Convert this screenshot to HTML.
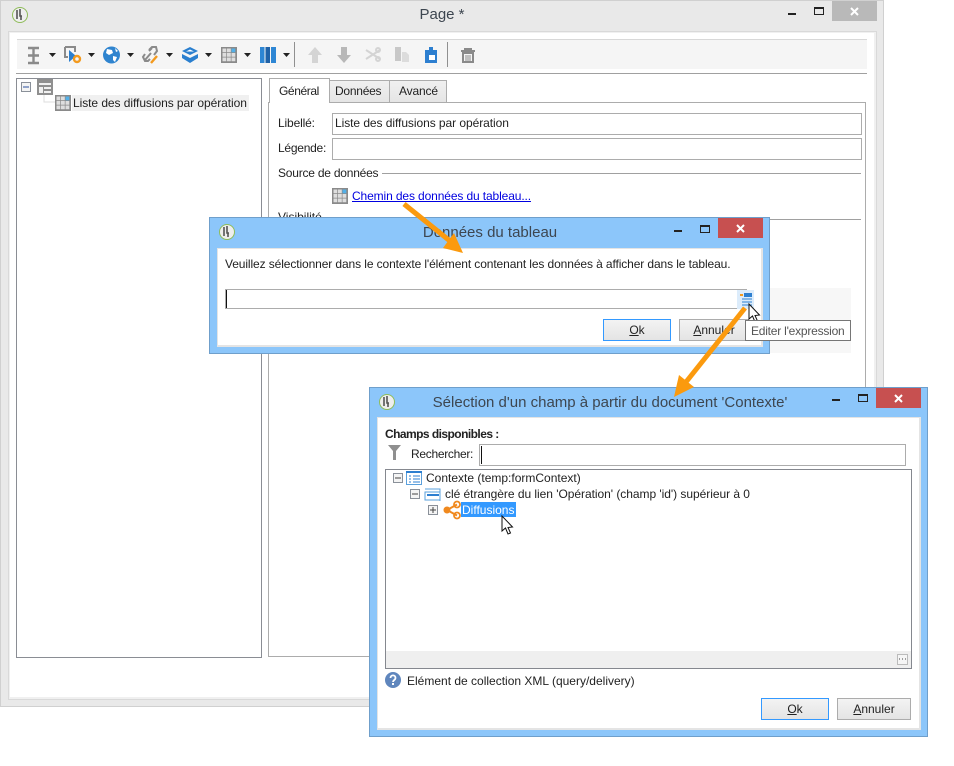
<!DOCTYPE html>
<html><head><meta charset="utf-8">
<style>
html,body{margin:0;padding:0;background:#fff}
body{width:954px;height:766px;position:relative;overflow:hidden;font:12px "Liberation Sans",sans-serif;color:#222}
.b{position:absolute;box-sizing:border-box}
.t{position:absolute;white-space:nowrap;line-height:16px}
.title{font-size:15px;color:#3d4650;line-height:20px;text-align:center}
.btn{position:absolute;box-sizing:border-box;height:22px;background:linear-gradient(#f3f3f3,#e4e4e4);border:1px solid #acacac;text-align:center;line-height:20px;font-size:12px;color:#222}
.btn.d{border:1px solid #3399ff}
svg{position:absolute;overflow:visible}
</style></head><body>

<!-- Main window -->
<div class="b" style="left:0;top:0;width:884px;height:707px;background:#e9e9e9;border:1px solid #d0d0d0;border-top-width:1px"></div>
<div class="b" style="left:8px;top:31px;width:869px;height:669px;background:#f0f0f0;border:1px solid #d9d9d9"></div>
<div class="b" style="left:10px;top:33px;width:864px;height:664px;background:#fff"></div>
<div class="t title" style="left:342px;top:5px;width:200px">Page *</div>
<svg style="left:0;top:0" width="30" height="30"><circle cx="20" cy="15" r="7.5" fill="#eee" stroke="#8fbc5a"/><path d="M17 10v9M20 9v7h2M21 16v4" stroke="#555" stroke-width="1.6" fill="none"/></svg>
<div class="b" style="left:788px;top:13px;width:8px;height:2px;background:#222"></div>
<div class="b" style="left:814px;top:7px;width:10px;height:8px;border:1px solid #222;border-top-width:2px"></div>
<div class="b" style="left:832px;top:1px;width:45px;height:20px;background:#b9b9b9"></div>
<svg style="left:850px;top:7px" width="10" height="9"><path d="M1 1l7 7M8 1l-7 7" stroke="#fff" stroke-width="2"/></svg>

<!-- Toolbar -->
<div class="b" style="left:17px;top:39px;width:850px;height:30px;background:#f5f5f5;border-top:1px solid #d8d8d8"></div>
<div class="b" style="left:16px;top:73px;width:851px;height:1px;background:#a0a0a0"></div>
<svg style="left:0;top:0" width="500" height="72">
 <path d="M28 48h11M28 63h11M33.500 48v15M28 55.500h11" stroke="#8a8a8a" stroke-width="2.400" fill="none"/>
 <path d="M65 47h10v5M65 47v10h3" stroke="#8a8a8a" stroke-width="2" fill="none"/><path d="M69 50l7 6-7 6z" fill="#2a7fcf"/><circle cx="77" cy="59" r="3" fill="none" stroke="#f39a1e" stroke-width="2.400"/>
 <circle cx="111.500" cy="55" r="8.500" fill="#2f84cf"/><path d="M107 49l5 1 1 3-4 2-3-2zM113 56l4 1-2 5-2-2zM115 48l3 3-2 1z" fill="#fff"/>
 <path d="M145 60l6-7M152 48l-3 3M145 54l-2 3 2 4 3 0 2-2M149 50l3-3 4 0 1 4-3 4" stroke="#8a8a8a" stroke-width="2" fill="none"/><path d="M151 63l6-7" stroke="#f39a1e" stroke-width="2.400"/>
 <path d="M190 47l8 4-8 4-8-4zM182 54l8 4 8-4v4l-8 5-8-5z" fill="#2a7fcf"/><path d="M190 51.500l-4 0 4-2 4 2z" fill="#fff"/>
 <rect x="221" y="47" width="16" height="16" fill="#8a8a8a"/>
 <path d="M222.500 48.500h3.800v3.800h-3.800zM227 48.500h3.800v3.800h-3.800zM222.500 53h3.800v3.800h-3.800zM227 53h3.800v3.800h-3.800zM231.500 53h3.800v3.800h-3.800zM222.500 57.500h3.800v3.800h-3.800zM227 57.500h3.800v3.800h-3.800zM231.500 57.500h3.800v3.800h-3.800z" fill="#dedede"/><rect x="231.500" y="48.500" width="3.800" height="3.800" fill="#52b0e8"/>
 <rect x="260" y="47" width="4.500" height="16" fill="#2d86d4"/><rect x="265.500" y="47" width="4.500" height="16" fill="#1f62a8"/><rect x="271" y="47" width="5" height="16" fill="#2d86d4"/>
 <g fill="#222"><path d="M49 53h7l-3.500 4zM88 53h7l-3.500 4zM127 53h7l-3.500 4zM166 53h7l-3.500 4zM205 53h7l-3.500 4zM244 53h7l-3.500 4zM283 53h7l-3.500 4z"/></g>
 <rect x="294" y="42" width="1" height="25" fill="#909090"/>
 <path d="M315 47l7 8h-4v8h-6v-8h-4z" fill="#d4d4d4"/>
 <path d="M344 63l7-8h-4v-8h-6v8h-4z" fill="#b8b8b8"/>
 <path d="M366 50l14 9M366 59l14-9" stroke="#d4d4d4" stroke-width="2"/><circle cx="378" cy="50" r="2" fill="none" stroke="#d4d4d4" stroke-width="2"/><circle cx="378" cy="59" r="2" fill="none" stroke="#d4d4d4" stroke-width="2"/>
 <path d="M395 47h6v14h-6z" fill="#c8c8c8"/><path d="M402 52l4 0 3 3v7h-7z" fill="#dcdcdc"/>
 <path d="M425 50h4v-3h4v3h4v13h-12z" fill="#2d7fd0"/><path d="M429 55h6l0 5h-6z" fill="#fff"/>
 <rect x="447" y="42" width="1" height="25" fill="#909090"/>
 <path d="M461 51h14M465 51v-2h6v2M463 53h10v9h-10z" stroke="#8a8a8a" stroke-width="2" fill="none"/><path d="M466 55v6M468 55v6M470 55v6" stroke="#8a8a8a"/>
</svg>

<!-- Tree panel -->
<div class="b" style="left:16px;top:78px;width:246px;height:580px;border:1px solid #8a8d94;background:#fff"></div>
<div class="b" style="left:72px;top:95px;width:177px;height:16px;background:#f0f0f0"></div>
<svg style="left:0;top:70px" width="80" height="50">
 <rect x="21.500" y="12.500" width="9" height="9" fill="#f4f4f4" stroke="#8a9099"/><path d="M23 17h6" stroke="#2b4f9e"/>
 <rect x="37" y="9" width="16" height="16" fill="#8f8f8f"/><path d="M39 13h12v2h-12zM39 17h4v6h-4zM44 17h7v2h-7zM44 21h7v2h-7z" fill="#f0f0f0"/>
 <path d="M44 25v7h11" stroke="#ddd" fill="none"/>
 <rect x="55" y="25" width="16" height="16" fill="#8a8a8a"/>
 <path d="M56.500 26.500h3.800v3.800h-3.800zM61 26.500h3.800v3.800h-3.800zM56.500 31h3.800v3.800h-3.800zM61 31h3.800v3.800h-3.800zM65.500 31h3.800v3.800h-3.800zM56.500 35.500h3.800v3.800h-3.800zM61 35.500h3.800v3.800h-3.800zM65.500 35.500h3.800v3.800h-3.800z" fill="#dedede"/><rect x="65.500" y="26.500" width="3.800" height="3.800" fill="#52b0e8"/>
</svg>
<div class="t" style="left:73px;top:95px;letter-spacing:-.06px">Liste des diffusions par opération</div>

<!-- Right panel -->
<div class="b" style="left:268px;top:102px;width:598px;height:555px;border:1px solid #acacac;background:#fff"></div>
<div class="b" style="left:329px;top:80px;width:61px;height:23px;border:1px solid #acacac;background:linear-gradient(#f0f0f0,#e5e5e5)"></div>
<div class="b" style="left:390px;top:80px;width:57px;height:23px;border:1px solid #acacac;border-left:0;background:linear-gradient(#f0f0f0,#e5e5e5)"></div>
<div class="b" style="left:269px;top:78px;width:61px;height:25px;border:1px solid #acacac;border-bottom:0;background:#fff"></div>
<div class="t" style="left:279px;top:83px;letter-spacing:-.4px">Général</div>
<div class="t" style="left:335px;top:83px;letter-spacing:-.25px">Données</div>
<div class="t" style="left:399px;top:83px;letter-spacing:-.15px">Avancé</div>
<div class="t" style="left:278px;top:115px;letter-spacing:-.15px">Libellé:</div>
<div class="b" style="left:332px;top:113px;width:530px;height:22px;border:1px solid #acacac"></div>
<div class="t" style="left:335px;top:115px;letter-spacing:-.06px">Liste des diffusions par opération</div>
<div class="t" style="left:278px;top:140px;letter-spacing:-.25px">Légende:</div>
<div class="b" style="left:332px;top:138px;width:530px;height:22px;border:1px solid #acacac"></div>
<div class="t" style="left:278px;top:165px;letter-spacing:-.22px">Source de données</div>
<div class="b" style="left:382px;top:173px;width:479px;height:1px;background:#a0a0a0"></div>
<svg style="left:332px;top:188px" width="16" height="16"><rect width="16" height="16" fill="#8a8a8a"/><path d="M1.500 1.500h3.800v3.800h-3.800zM6 1.500h3.800v3.800h-3.800zM1.500 6h3.800v3.800h-3.800zM6 6h3.800v3.800h-3.800zM10.500 6h3.800v3.800h-3.800zM1.500 10.500h3.800v3.800h-3.800zM6 10.500h3.800v3.800h-3.800zM10.500 10.500h3.800v3.800h-3.800z" fill="#dedede"/><rect x="10.500" y="1.500" width="3.800" height="3.800" fill="#52b0e8"/></svg>
<div class="t" style="left:352px;top:188px;color:#0000e0;text-decoration:underline;letter-spacing:-.12px">Chemin des données du tableau...</div>
<div class="t" style="left:278px;top:209px">Visibilité</div>
<div class="b" style="left:325px;top:219px;width:536px;height:1px;background:#a0a0a0"></div>
<div class="b" style="left:765px;top:288px;width:86px;height:65px;background:#f7f7f7"></div>

<!-- Dialog 2 -->
<div class="b" style="left:209px;top:217px;width:561px;height:137px;background:#8cc6fa;border:1px solid #6f9fcb"></div>
<div class="b" style="left:217px;top:248px;width:546px;height:99px;background:#fff;border:1px solid #e4e4e4;border-width:1px 2px 2px 1px"></div>
<div class="t title" style="left:340px;top:223px;width:300px">Données du tableau</div>
<svg style="left:210px;top:215px" width="30" height="30"><circle cx="17" cy="17" r="7.500" fill="#eee" stroke="#8fbc5a"/><path d="M14 12v9M17 11v7h2M18 18v4" stroke="#555" stroke-width="1.600" fill="none"/></svg>
<div class="b" style="left:674px;top:230px;width:8px;height:2px;background:#222"></div>
<div class="b" style="left:700px;top:225px;width:10px;height:8px;border:1px solid #222;border-top-width:2px"></div>
<div class="b" style="left:718px;top:218px;width:45px;height:20px;background:#c75050"></div>
<svg style="left:736px;top:224px" width="10" height="9"><path d="M1 1l7 7M8 1l-7 7" stroke="#fff" stroke-width="2"/></svg>
<div class="t" style="left:225px;top:256px;letter-spacing:-.105px">Veuillez sélectionner dans le contexte l'élément contenant les données à afficher dans le tableau.</div>
<div class="b" style="left:225px;top:289px;width:522px;height:20px;border:1px solid #acacac;background:#fff"></div>
<div class="b" style="left:226px;top:290px;width:1px;height:18px;background:#111"></div>
<div class="b" style="left:737px;top:290px;width:17px;height:19px;background:#dcecfb"></div>
<svg style="left:737px;top:290px" width="17" height="19"><rect x="3" y="4" width="3" height="2" fill="#f39a1e"/><rect x="7" y="3" width="8" height="4" fill="#2d7fd0"/><path d="M5 9h10M5 12h10M5 15h10" stroke="#2d7fd0"/></svg>
<div class="btn d" style="left:603px;top:319px;width:68px"><u>O</u>k</div>
<div class="btn" style="left:679px;top:319px;width:70px"><u>A</u>nnuler</div>
<svg style="left:748px;top:303px" width="14" height="22"><path d="M1 1v15l3.500-3 2.500 6 2.500-1-2.500-5.500 4.500-.5z" fill="#fff" stroke="#111"/></svg>
<div class="b" style="left:745px;top:320px;width:106px;height:21px;background:#fff;border:1px solid #767676"></div>
<div class="t" style="left:751px;top:323px;color:#555;letter-spacing:-.22px">Editer l'expression</div>

<!-- Dialog 3 -->
<div class="b" style="left:369px;top:387px;width:559px;height:350px;background:#8cc6fa;border:1px solid #6f9fcb"></div>
<div class="b" style="left:377px;top:417px;width:544px;height:313px;background:#fff;border:1px solid #e4e4e4;border-width:1px 2px 2px 1px"></div>
<div class="t title" style="left:410px;top:393px;width:400px">Sélection d'un champ à partir du document 'Contexte'</div>
<svg style="left:370px;top:385px" width="30" height="30"><circle cx="17" cy="17" r="7.500" fill="#eee" stroke="#8fbc5a"/><path d="M14 12v9M17 11v7h2M18 18v4" stroke="#555" stroke-width="1.600" fill="none"/></svg>
<div class="b" style="left:832px;top:399px;width:8px;height:2px;background:#222"></div>
<div class="b" style="left:858px;top:394px;width:10px;height:8px;border:1px solid #222;border-top-width:2px"></div>
<div class="b" style="left:876px;top:388px;width:45px;height:20px;background:#c75050"></div>
<svg style="left:894px;top:394px" width="10" height="9"><path d="M1 1l7 7M8 1l-7 7" stroke="#fff" stroke-width="2"/></svg>
<div class="t" style="left:385px;top:426px;font-weight:bold;letter-spacing:-.55px">Champs disponibles :</div>
<svg style="left:388px;top:445px" width="14" height="15"><path d="M0 0h13l-5 6v9h-3v-9z" fill="#8f8f8f"/></svg>
<div class="t" style="left:411px;top:446px;letter-spacing:-.3px">Rechercher:</div>
<div class="b" style="left:479px;top:444px;width:427px;height:22px;border:1px solid #acacac"></div>
<div class="b" style="left:481px;top:446px;width:1px;height:18px;background:#111"></div>
<div class="b" style="left:385px;top:469px;width:527px;height:200px;border:1px solid #85888f;background:#fff"></div>
<div class="b" style="left:386px;top:651px;width:525px;height:17px;background:#efefef"></div>
<div class="b" style="left:897px;top:654px;width:11px;height:11px;background:#f5f5f5;border:1px solid #bbb"></div>
<svg style="left:899px;top:658px" width="8" height="3"><path d="M0 1h1M3 1h1M6 1h1" stroke="#444"/></svg>
<svg style="left:385px;top:465px" width="110" height="60">
 <rect x="8.500" y="8.500" width="9" height="9" fill="#f4f4f4" stroke="#8a9099"/><path d="M10 13h6" stroke="#444"/>
 <rect x="21.500" y="6.500" width="15" height="13" fill="#fff" stroke="#5aa0dc"/><path d="M21 7h16" stroke="#2d7fd0" stroke-width="2"/><path d="M24 11h2M24 14h2M24 17h2M28 11h7M28 14h7M28 17h7" stroke="#2d7fd0"/>
 <rect x="25.500" y="24.500" width="9" height="9" fill="#f4f4f4" stroke="#8a9099"/><path d="M27 29h6" stroke="#444"/>
 <path d="M40 24h15v12" fill="none" stroke="#5aa0dc"/><rect x="40" y="27" width="15" height="8" fill="#fff" stroke="#5aa0dc"/><path d="M42 30h12" stroke="#2d7fd0" stroke-width="2"/>
 <rect x="43.500" y="40.500" width="9" height="9" fill="#f4f4f4" stroke="#8a9099"/><path d="M45 45h6M48 42v6" stroke="#444"/>
 <path d="M62 45l10-5.500M62 45l10 5.500" stroke="#f0891e" stroke-width="2" fill="none"/><circle cx="62" cy="45" r="3.500" fill="#f0891e"/><circle cx="72" cy="39.500" r="3" fill="none" stroke="#f0891e" stroke-width="1.800"/><circle cx="72" cy="50.500" r="3" fill="none" stroke="#f0891e" stroke-width="1.800"/>
</svg>
<div class="t" style="left:426px;top:470px">Contexte (temp:formContext)</div>
<div class="t" style="left:445px;top:486px;letter-spacing:-.04px">clé étrangère du lien 'Opération' (champ 'id') supérieur à 0</div>
<div class="b" style="left:461px;top:502px;width:55px;height:15px;background:#3399ff"></div>
<div class="t" style="left:462px;top:502px;color:#fff">Diffusions</div>
<svg style="left:501px;top:515px" width="14" height="22"><path d="M1 1v15l3.500-3 2.500 6 2.500-1-2.500-5.500 4.500-.5z" fill="#fff" stroke="#111"/></svg>
<svg style="left:385px;top:672px" width="16" height="16"><circle cx="8" cy="8" r="8" fill="#5f86bd"/><path d="M5.500 6c0-3.500 5-3.500 5 0 0 2-2.500 2-2.500 4" stroke="#fff" stroke-width="1.800" fill="none"/><rect x="7" y="11" width="2" height="2" fill="#fff"/></svg>
<div class="t" style="left:407px;top:673px">Elément de collection XML (query/delivery)</div>
<div class="btn d" style="left:761px;top:698px;width:68px"><u>O</u>k</div>
<div class="btn" style="left:837px;top:698px;width:74px"><u>A</u>nnuler</div>

<!-- Arrows -->
<svg style="left:0;top:0" width="954" height="766">
 <path d="M404 204L450 241" stroke="#fb9a0e" stroke-width="5" fill="none"/><path d="M463 253L443 248 454 233z" fill="#fb9a0e"/>
 <path d="M745 308L686 382" stroke="#fb9a0e" stroke-width="5" fill="none"/><path d="M674 397L679 375 694 387z" fill="#fb9a0e"/>
</svg>
</body></html>
